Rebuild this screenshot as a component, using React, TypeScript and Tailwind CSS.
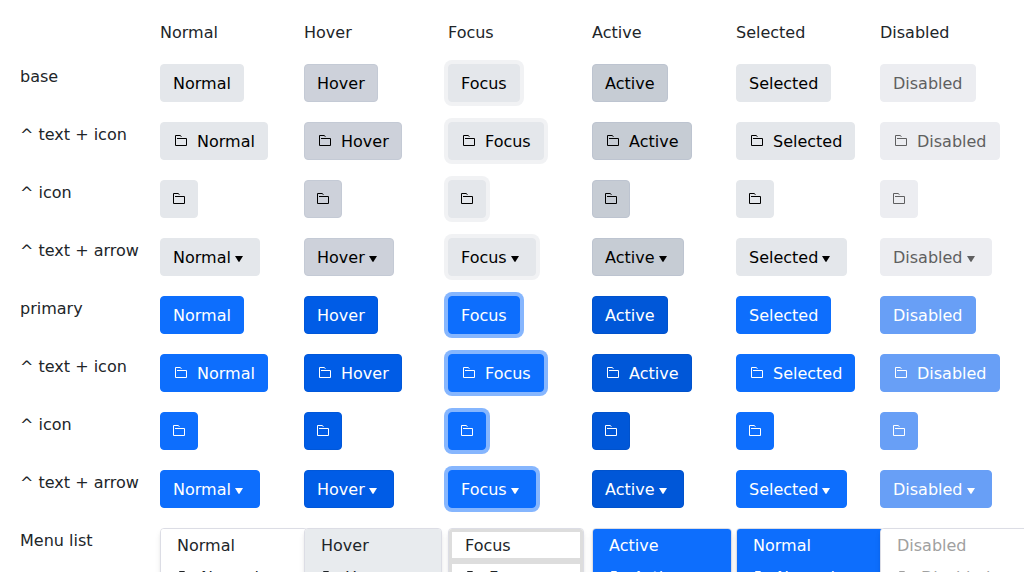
import { Fragment, type ReactNode } from "react";
import clsx from "clsx";

type State = "Normal" | "Hover" | "Focus" | "Active" | "Selected" | "Disabled";
type Kind = "base" | "primary";
type Variant = "text" | "text-icon" | "icon" | "text-arrow";

const STATES: State[] = ["Normal", "Hover", "Focus", "Active", "Selected", "Disabled"];

const ROWS: { label: string; kind: Kind; variant: Variant }[] = [
  { label: "base", kind: "base", variant: "text" },
  { label: "^ text + icon", kind: "base", variant: "text-icon" },
  { label: "^ icon", kind: "base", variant: "icon" },
  { label: "^ text + arrow", kind: "base", variant: "text-arrow" },
  { label: "primary", kind: "primary", variant: "text" },
  { label: "^ text + icon", kind: "primary", variant: "text-icon" },
  { label: "^ icon", kind: "primary", variant: "icon" },
  { label: "^ text + arrow", kind: "primary", variant: "text-arrow" },
];

const BUTTON_STYLES: Record<Kind, Record<State, string>> = {
  base: {
    Normal: "border-[#e4e7eb] bg-[#e4e7eb] text-black",
    Hover: "border-[#c4cad5] bg-[#cdd1da] text-black",
    Focus: "border-[#e4e7eb] bg-[#e4e7eb] text-black ring-4 ring-[#f1f2f4]",
    Active: "border-[#bdc4d0] bg-[#c6ccd4] text-black",
    Selected: "border-[#e4e7eb] bg-[#e4e7eb] text-black",
    Disabled: "border-[#ecedf1] bg-[#ecedf1] text-[#5f5f60]",
  },
  primary: {
    Normal: "border-[#0d6efd] bg-[#0d6efd] text-white",
    Hover: "border-[#0057d9] bg-[#005ce6] text-white",
    Focus: "border-[#0d6efd] bg-[#0d6efd] text-white ring-4 ring-[#86b6fe]",
    Active: "border-[#0052cc] bg-[#0057d8] text-white",
    Selected: "border-[#0d6efd] bg-[#0d6efd] text-white",
    Disabled: "border-[#689ff6] bg-[#689ff6] text-white",
  },
};

const MENUS: { text: string; item: string }[] = [
  { text: "Normal", item: "bg-white text-[#212529]" },
  { text: "Hover", item: "bg-[#e8ebee] text-[#212529]" },
  { text: "Focus", item: "bg-white text-[#212529] inset-ring-3 inset-ring-[#dddddd]" },
  { text: "Active", item: "bg-[#0d6efd] text-white" },
  { text: "Normal", item: "bg-[#0d6efd] text-white" },
  { text: "Disabled", item: "bg-white text-[#a0a0a0]" },
];

function Text({ children }: { children: ReactNode }) {
  return <span className="block h-6 leading-[26px] whitespace-nowrap">{children}</span>;
}

function FolderIcon() {
  return (
    <svg width="12" height="12" viewBox="0 0 12 12" fill="none" stroke="currentColor" aria-hidden="true">
      <path d="M.5 3.5V.5H5L6.5 1.5M.5 3V10.5H11.5V3.5H2" />
    </svg>
  );
}

function ArrowIcon() {
  return (
    <svg className="mt-1" width="16" height="6" viewBox="0 0 16 6" fill="currentColor" aria-hidden="true">
      <path d="M4 0H12L8.6 5.6Q8 6.3 7.4 5.6Z" />
    </svg>
  );
}

function SampleButton({ state, kind, variant }: { state: State; kind: Kind; variant: Variant }) {
  const iconOnly = variant === "icon";
  return (
    <button
      type="button"
      disabled={state === "Disabled"}
      aria-label={iconOnly ? state : undefined}
      className={clsx("inline-flex h-[38px] items-center rounded border px-3", BUTTON_STYLES[kind][state])}
    >
      {iconOnly && <FolderIcon />}
      {variant === "text-icon" && (
        <span className="mr-2 flex w-4 justify-center">
          <FolderIcon />
        </span>
      )}
      {!iconOnly && <Text>{state}</Text>}
      {variant === "text-arrow" && <ArrowIcon />}
    </button>
  );
}

function MenuList({ text, item, disabled }: { text: string; item: string; disabled: boolean }) {
  const itemClass = clsx("flex w-full items-center py-1 pr-12 pl-4 text-left", item);
  return (
    <ul className="relative w-max overflow-hidden rounded border border-[#dcdde5] bg-white shadow-md">
      <li>
        <button type="button" disabled={disabled} className={itemClass}>
          <Text>{text}</Text>
        </button>
      </li>
      <li>
        <button type="button" disabled={disabled} className={itemClass}>
          <span className="mr-2 flex w-4 justify-center">
            <FolderIcon />
          </span>
          <Text>{text}</Text>
        </button>
      </li>
    </ul>
  );
}

export default function App() {
  return (
    <main className="h-screen overflow-hidden bg-white font-['DejaVu_Sans',sans-serif] text-base text-[#212529]">
      <div className="grid grid-cols-[120px_repeat(6,minmax(124px,1fr))] items-start gap-5 p-5">
        <div />
        {STATES.map((state) => (
          <Text key={state}>{state}</Text>
        ))}
        {ROWS.map((row) => (
          <Fragment key={`${row.kind}-${row.variant}`}>
            <Text>{row.label}</Text>
            {STATES.map((state) => (
              <div key={state} className="flex">
                <SampleButton state={state} kind={row.kind} variant={row.variant} />
              </div>
            ))}
          </Fragment>
        ))}
        <Text>Menu list</Text>
        {MENUS.map((menu, i) => (
          <div key={STATES[i]} className="min-w-0">
            <MenuList text={menu.text} item={menu.item} disabled={STATES[i] === "Disabled"} />
          </div>
        ))}
      </div>
    </main>
  );
}
